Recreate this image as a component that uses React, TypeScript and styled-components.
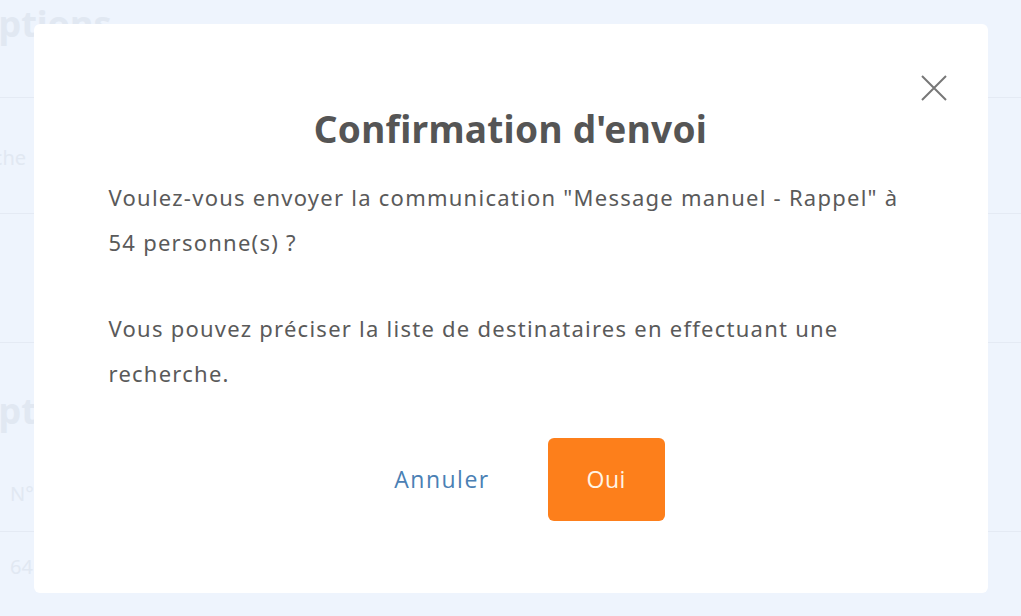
import React from 'react'
import styled, { createGlobalStyle } from 'styled-components'

const GlobalStyle = createGlobalStyle`
  html, body {
    margin: 0;
    padding: 0;
    background: #eef4fd;
    font-family: "Noto Sans", "Open Sans", sans-serif;
  }
`

const Page = styled('div')`
  width: 1021px;
  height: 616px;
  overflow: hidden;
  display: flex;
  flex-direction: column;
  color: #e1e8f2;
`
const PageTitle = styled('h1')<{ top: number }>`
  font-size: 36px;
  font-weight: 700;
  margin: ${(p) => p.top}px 0 0 -30px;
  line-height: 44px;
`
const Divider = styled('div')<{ top: number }>`
  height: 1px;
  background: #e4eaf4;
  margin-top: ${(p) => p.top}px;
`
const FaintText = styled('div')<{ top: number; left: number }>`
  font-size: 20px;
  line-height: 26px;
  margin: ${(p) => `${p.top}px 0 0 ${p.left}px`};
`

const Overlay = styled('div')`
  position: fixed;
  inset: 0;
  display: flex;
  align-items: center;
  justify-content: center;
`
const Modal = styled('div')`
  position: relative;
  width: 954px;
  height: 569px;
  box-sizing: border-box;
  background: #fff;
  border-radius: 6px;
  padding: 80px 75px 0;
  display: flex;
  flex-direction: column;
`
const CloseButton = styled('button')`
  position: absolute;
  top: 51px;
  right: 41px;
  width: 26px;
  height: 26px;
  padding: 0;
  border: none;
  background: none;
  cursor: pointer;
`
const Title = styled('h2')`
  margin: 0 0 21px;
  text-align: center;
  font-size: 37px;
  font-weight: 700;
  letter-spacing: 0.3px;
  color: #555;
  line-height: 50px;
`
const Paragraph = styled('p')`
  margin: 0 0 41px;
  font-size: 22px;
  line-height: 45px;
  letter-spacing: 1.25px;
  color: #5a5a5a;
`
const Actions = styled('div')`
  display: flex;
  justify-content: center;
  align-items: center;
  gap: 58px;
  margin-top: 1px;
  padding-left: 38px;
`
const LinkButton = styled('button')`
  border: none;
  background: none;
  font-family: "Open Sans", sans-serif;
  font-size: 23px;
  letter-spacing: 1.5px;
  color: #4a80b4;
  cursor: pointer;
  padding: 0;
`
const PrimaryButton = styled('button')`
  width: 117px;
  height: 83px;
  border: none;
  border-radius: 6px;
  background: #fd7f1b;
  color: #fff4e6;
  font-family: "Open Sans", sans-serif;
  font-size: 23px;
  letter-spacing: 0.5px;
  cursor: pointer;
`

const App = () => {
  return (
    <>
      <GlobalStyle />
      <Page>
        <PageTitle top={2}>Options</PageTitle>
        <Divider top={51} />
        <FaintText top={47} left={-72}>Recherche</FaintText>
        <Divider top={42} />
        <Divider top={128} />
        <PageTitle top={46}>Options</PageTitle>
        <FaintText top={48} left={10}>N°</FaintText>
        <Divider top={24} />
        <FaintText top={22} left={10}>64</FaintText>
      </Page>
      <Overlay>
        <Modal>
          <CloseButton aria-label="Fermer">
            <svg width="26" height="26" viewBox="0 0 26 26">
              <path d="M1 1 L25 25 M25 1 L1 25" stroke="#777" strokeWidth="2" />
            </svg>
          </CloseButton>
          <Title>Confirmation d'envoi</Title>
          <Paragraph>
            Voulez-vous envoyer la communication "Message manuel - Rappel" à 54 personne(s) ?
          </Paragraph>
          <Paragraph>
            Vous pouvez préciser la liste de destinataires en effectuant une recherche.
          </Paragraph>
          <Actions>
            <LinkButton>Annuler</LinkButton>
            <PrimaryButton>Oui</PrimaryButton>
          </Actions>
        </Modal>
      </Overlay>
    </>
  )
}

export default App
